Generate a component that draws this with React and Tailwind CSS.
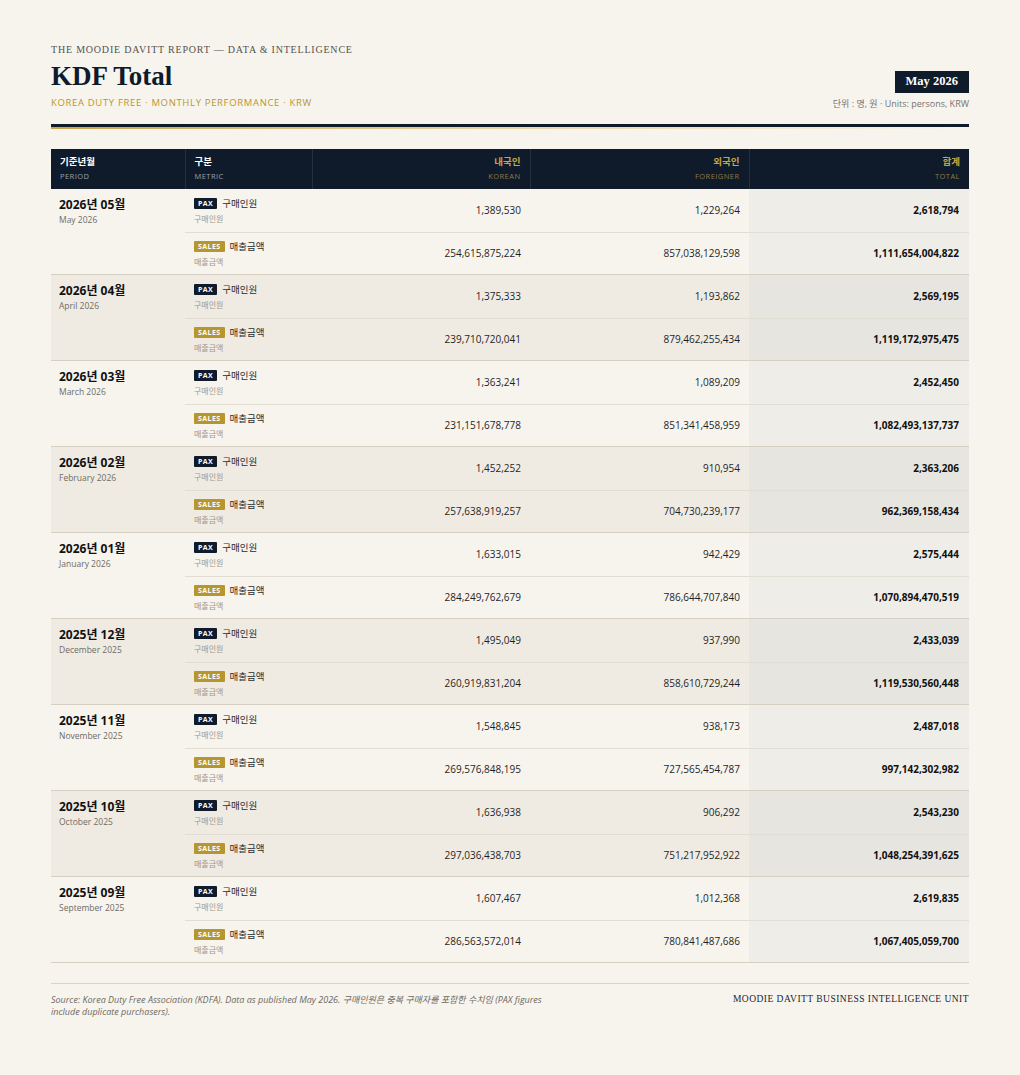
import React from 'react';

const rows = [
  { ko: '2026년 05월', en: 'May 2026', pax: ['1,389,530', '1,229,264', '2,618,794'], sales: ['254,615,875,224', '857,038,129,598', '1,111,654,004,822'] },
  { ko: '2026년 04월', en: 'April 2026', pax: ['1,375,333', '1,193,862', '2,569,195'], sales: ['239,710,720,041', '879,462,255,434', '1,119,172,975,475'] },
  { ko: '2026년 03월', en: 'March 2026', pax: ['1,363,241', '1,089,209', '2,452,450'], sales: ['231,151,678,778', '851,341,458,959', '1,082,493,137,737'] },
  { ko: '2026년 02월', en: 'February 2026', pax: ['1,452,252', '910,954', '2,363,206'], sales: ['257,638,919,257', '704,730,239,177', '962,369,158,434'] },
  { ko: '2026년 01월', en: 'January 2026', pax: ['1,633,015', '942,429', '2,575,444'], sales: ['284,249,762,679', '786,644,707,840', '1,070,894,470,519'] },
  { ko: '2025년 12월', en: 'December 2025', pax: ['1,495,049', '937,990', '2,433,039'], sales: ['260,919,831,204', '858,610,729,244', '1,119,530,560,448'] },
  { ko: '2025년 11월', en: 'November 2025', pax: ['1,548,845', '938,173', '2,487,018'], sales: ['269,576,848,195', '727,565,454,787', '997,142,302,982'] },
  { ko: '2025년 10월', en: 'October 2025', pax: ['1,636,938', '906,292', '2,543,230'], sales: ['297,036,438,703', '751,217,952,922', '1,048,254,391,625'] },
  { ko: '2025년 09월', en: 'September 2025', pax: ['1,607,467', '1,012,368', '2,619,835'], sales: ['286,563,572,014', '780,841,487,686', '1,067,405,059,700'] },
];

const serif = { fontFamily: '"Liberation Serif", "DejaVu Serif", serif' };

function Metric({ kind, label }) {
  const badge =
    kind === 'PAX'
      ? 'bg-[#0f1b2a] text-white'
      : 'bg-[#b8962e] text-white';
  return (
    <div className="flex flex-col gap-[6px]">
      <div className="flex items-center gap-[5px]">
        <span className={`${badge} rounded-[1px] px-[4px] h-[11px] flex items-center text-[7px] font-bold leading-none tracking-[0.06em]`}>{kind}</span>
        <span className="text-[9.5px] text-[#2b2b2b] leading-none">{label}</span>
      </div>
      <span className="text-[8px] text-[#9d988c] leading-none">{label}</span>
    </div>
  );
}

function HeadCell({ ko, en, right, gold }) {
  return (
    <th className={`px-[9px] py-0 font-normal border-r border-[#24303f] last:border-r-0 ${right ? 'text-right' : 'text-left'}`}>
      <div className={`text-[9.5px] font-bold leading-none ${gold ? 'text-[#c9a63e]' : 'text-white'}`}>{ko}</div>
      <div className={`mt-[6px] text-[7.5px] tracking-[0.06em] leading-none ${gold ? 'text-[#8d7a44]' : 'text-[#9aa1ab]'}`}>{en}</div>
    </th>
  );
}

export default function App() {
  return (
    <div className="min-h-[1075px] bg-[#f7f4ee] px-[51px] pt-[45px] text-[#1a1a1a]" style={{ fontFamily: '"Open Sans", "Noto Sans CJK KR", sans-serif' }}>
      {/* Title block */}
      <div className="flex items-end justify-between">
        <div>
          <div className="text-[10px] tracking-[0.08em] text-[#55524c] leading-none" style={serif}>
            THE MOODIE DAVITT REPORT — DATA &amp; INTELLIGENCE
          </div>
          <h1 className="mt-[6px] text-[27px] font-bold leading-[30px] text-[#0f1b2a]" style={serif}>KDF Total</h1>
          <div className="mt-[7px] text-[9.5px] tracking-[0.07em] text-[#b8962e] leading-none">
            KOREA DUTY FREE · MONTHLY PERFORMANCE · KRW
          </div>
        </div>
        <div className="flex flex-col items-end">
          <div className="bg-[#0f1b2a] px-[11px] h-[22px] flex items-center text-white text-[12.5px] font-bold" style={serif}>May 2026</div>
          <div className="mt-[6px] text-[9px] text-[#77736b] leading-none">단위 : 명, 원 · Units: persons, KRW</div>
        </div>
      </div>

      {/* Rule */}
      <div className="mt-[16px] h-[3px] bg-[#0f1b2a]" />
      <div className="h-[2px] bg-gradient-to-r from-[#c9a54a] via-[#e6d5a6] to-[#f7f4ee]" />

      {/* Table */}
      <table className="mt-[20px] w-full border-collapse table-fixed">
        <colgroup>
          <col className="w-[134px]" />
          <col className="w-[127px]" />
          <col className="w-[218px]" />
          <col className="w-[219px]" />
          <col className="w-[220px]" />
        </colgroup>
        <thead>
          <tr className="bg-[#0f1b2a] h-[40px]">
            <HeadCell ko="기준년월" en="PERIOD" />
            <HeadCell ko="구분" en="METRIC" />
            <HeadCell ko="내국인" en="KOREAN" right gold />
            <HeadCell ko="외국인" en="FOREIGNER" right gold />
            <HeadCell ko="합계" en="TOTAL" right gold />
          </tr>
        </thead>
        <tbody>
          {rows.map((r, i) => {
            const even = i % 2 === 1;
            const bg = even ? 'bg-[#efebe3]' : 'bg-[#f7f4ee]';
            const totalBg = even ? 'bg-[#e7e5df]' : 'bg-[#efede7]';
            return (
              <React.Fragment key={r.ko}>
                <tr className={`${bg} h-[44px] border-b border-[#e2ddd2]`}>
                  <td rowSpan={2} className="align-top px-[8px] pt-[8px] border-b border-[#d6d0c2]">
                    <div className="text-[12px] font-bold text-[#111] leading-[16px]">{r.ko}</div>
                    <div className="mt-[3px] text-[8.5px] text-[#6f6b63] leading-none">{r.en}</div>
                  </td>
                  <td className="px-[9px] align-middle">
                    <Metric kind="PAX" label="구매인원" />
                  </td>
                  <td className="px-[9px] text-right text-[10px] text-[#1f1f1f]">{r.pax[0]}</td>
                  <td className="px-[9px] text-right text-[10px] text-[#1f1f1f]">{r.pax[1]}</td>
                  <td className={`${totalBg} px-[10px] text-right text-[10px] font-bold text-[#111]`}>{r.pax[2]}</td>
                </tr>
                <tr className={`${bg} h-[42px] border-b border-[#d6d0c2]`}>
                  <td className="px-[9px] align-middle">
                    <Metric kind="SALES" label="매출금액" />
                  </td>
                  <td className="px-[9px] text-right text-[10px] text-[#1f1f1f]">{r.sales[0]}</td>
                  <td className="px-[9px] text-right text-[10px] text-[#1f1f1f]">{r.sales[1]}</td>
                  <td className={`${totalBg} px-[10px] text-right text-[10px] font-bold text-[#111]`}>{r.sales[2]}</td>
                </tr>
              </React.Fragment>
            );
          })}
        </tbody>
      </table>

      {/* Footer */}
      <div className="mt-[20px] border-t border-[#d9d4c8] pt-[10px] flex justify-between items-start">
        <p className="w-[495px] text-[9px] italic leading-[12px] text-[#6d6960]">
          Source: Korea Duty Free Association (KDFA). Data as published May 2026. 구매인원은 중복 구매자를 포함한 수치임 (PAX figures include duplicate purchasers).
        </p>
        <div className="text-[9.5px] tracking-[0.05em] text-[#1c2530] leading-none mt-[1px]" style={serif}>
          MOODIE DAVITT BUSINESS INTELLIGENCE UNIT
        </div>
      </div>
    </div>
  );
}
